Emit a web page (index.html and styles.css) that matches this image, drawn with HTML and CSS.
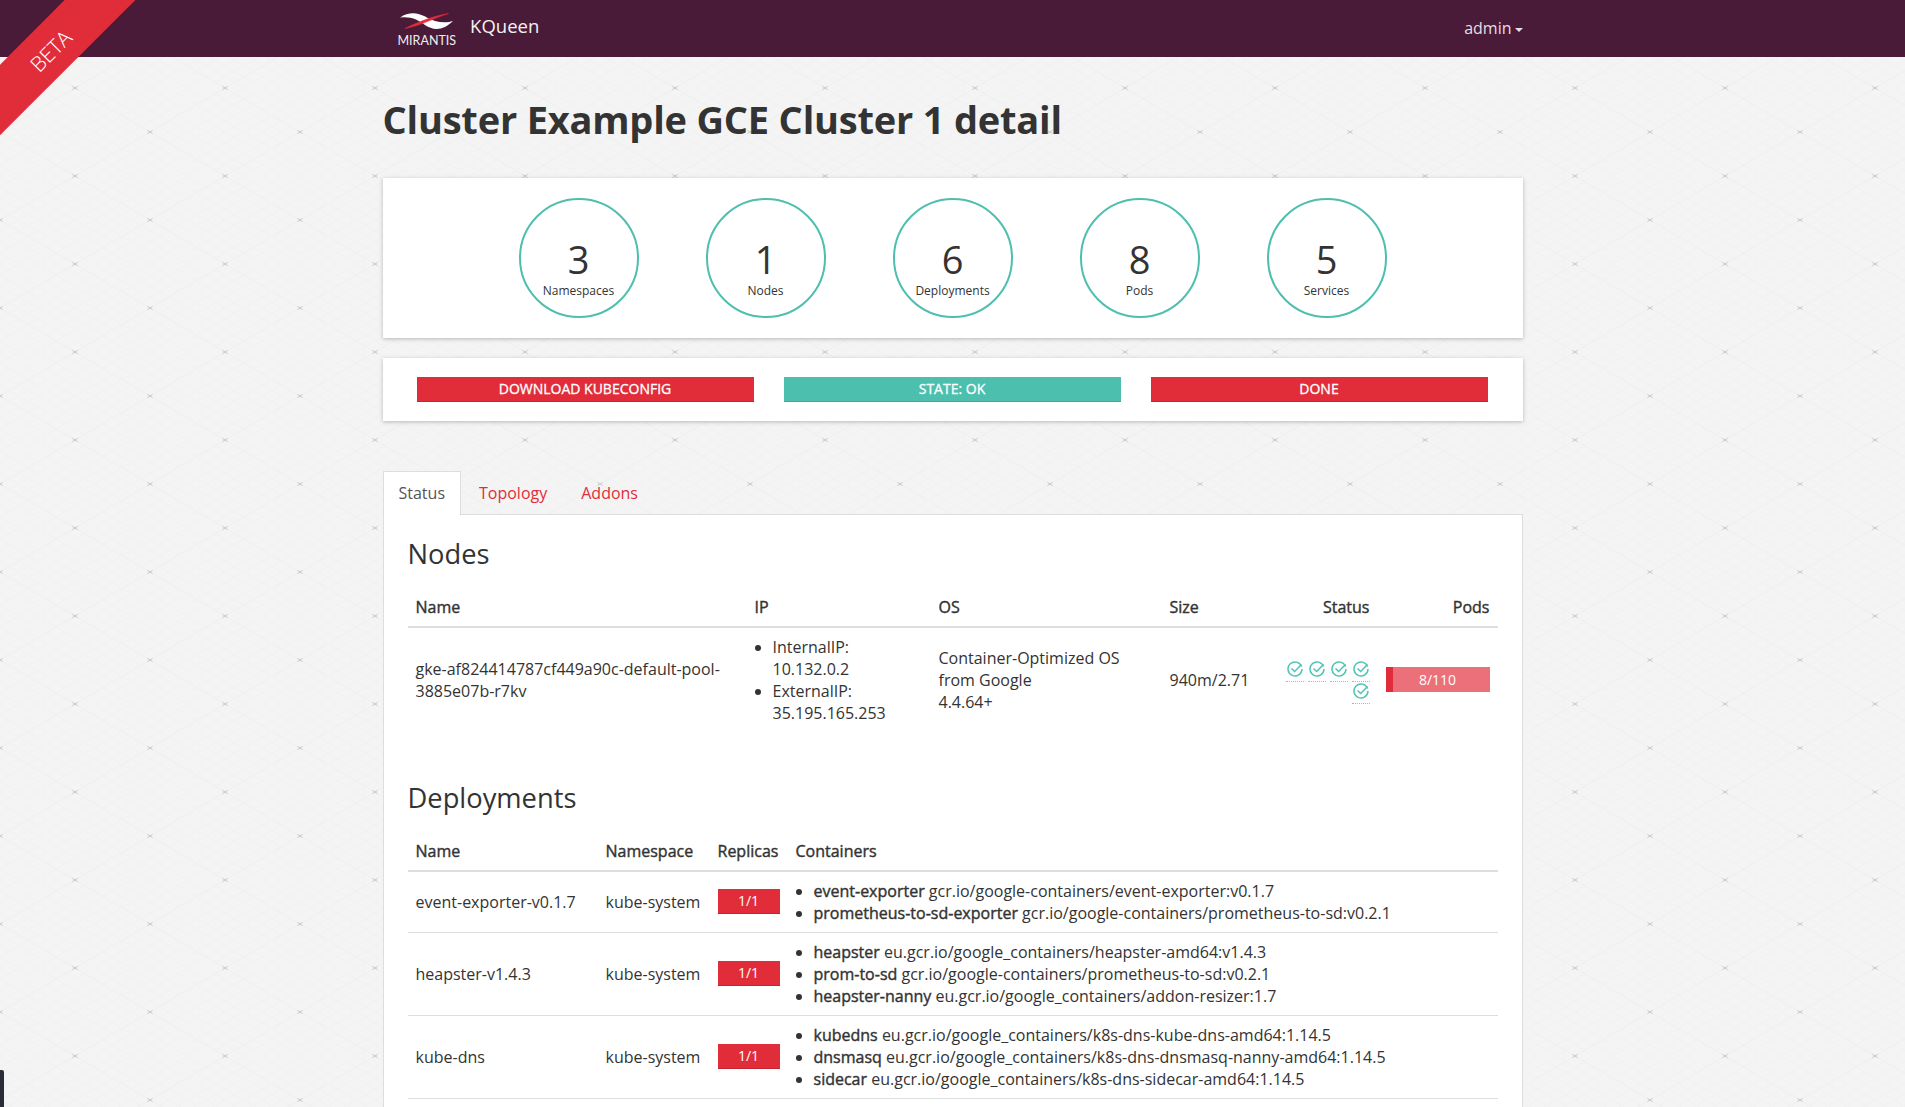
FILE: index.html
```html
<!DOCTYPE html>
<html lang="en">

<head>
  <meta charset="UTF-8">
  <meta name="viewport" content="width=device-width, initial-scale=1.0">
  <title>KQueen - Cluster detail</title>
  <link rel="stylesheet" href="styles.css">
</head>

<body>

  <div class="ribbon">BETA</div>
  <div class="corner-tab"></div>

  <nav class="navbar">
    <div class="container navbar-inner">
      <a class="brand" href="#">
        <span class="logo">
          <svg width="54" height="17" viewBox="0 0 54 17">
            <path d="M0 4.7C4 1.5 9 .3 13 .3C22 .3 28 6 35 8C41 9.8 48 9.8 53 8C48 13 42 16 36.7 16C28 16 22 9 16 6.5C11 4.5 5 3.8 0 4.7Z" fill="#fff"/>
            <path d="M5 15.5C20 13 33 5.5 48.5 .6C33 3 18 9 5 15.5Z" fill="#e12d3a" stroke="#e12d3a" stroke-width=".5"/>
          </svg>
          <span class="logo-text">MIRANTIS</span>
        </span>
        <span class="brand-name">KQueen</span>
      </a>
      <a class="user-menu" href="#">admin<span class="caret"></span></a>
    </div>
  </nav>

  <div class="container">
    <h1 class="page-title">Cluster Example GCE Cluster 1 detail</h1>

    <div class="card stats">
      <div class="stat"><span class="stat-value">3</span><span class="stat-label">Namespaces</span></div>
      <div class="stat"><span class="stat-value">1</span><span class="stat-label">Nodes</span></div>
      <div class="stat"><span class="stat-value">6</span><span class="stat-label">Deployments</span></div>
      <div class="stat"><span class="stat-value">8</span><span class="stat-label">Pods</span></div>
      <div class="stat"><span class="stat-value">5</span><span class="stat-label">Services</span></div>
    </div>

    <div class="card actions">
      <a class="btn btn-red" href="#">Download kubeconfig</a>
      <span class="btn btn-green">State: OK</span>
      <a class="btn btn-red" href="#">Done</a>
    </div>

    <ul class="tabs">
      <li class="tab active"><a href="#">Status</a></li>
      <li class="tab"><a href="#">Topology</a></li>
      <li class="tab"><a href="#">Addons</a></li>
    </ul>

    <div class="tab-panel">
      <h2 class="section-title">Nodes</h2>
      <table class="table nodes-table">
        <colgroup>
          <col class="c-node-name"><col class="c-node-ip"><col class="c-node-os"><col class="c-node-size"><col class="c-node-status"><col class="c-node-pods">
        </colgroup>
        <thead>
          <tr>
            <th>Name</th>
            <th>IP</th>
            <th>OS</th>
            <th>Size</th>
            <th class="right">Status</th>
            <th class="right">Pods</th>
          </tr>
        </thead>
        <tbody>
          <tr>
            <td>gke-af824414787cf449a90c-default-pool-3885e07b-r7kv</td>
            <td>
              <ul class="plain-list">
                <li>InternalIP: 10.132.0.2</li>
                <li>ExternalIP: 35.195.165.253</li>
              </ul>
            </td>
            <td>Container-Optimized OS from Google<br>4.4.64+</td>
            <td>940m/2.71</td>
            <td class="right status-cell">
              <span class="check"><svg width="16" height="16" viewBox="0 0 16 16"><path d="M14.6 5.6A7 7 0 1 0 15 8" /><path d="M4.5 7.5L7.6 10.5L14.5 3.5" /></svg></span>
              <span class="check"><svg width="16" height="16" viewBox="0 0 16 16"><path d="M14.6 5.6A7 7 0 1 0 15 8" /><path d="M4.5 7.5L7.6 10.5L14.5 3.5" /></svg></span>
              <span class="check"><svg width="16" height="16" viewBox="0 0 16 16"><path d="M14.6 5.6A7 7 0 1 0 15 8" /><path d="M4.5 7.5L7.6 10.5L14.5 3.5" /></svg></span>
              <span class="check"><svg width="16" height="16" viewBox="0 0 16 16"><path d="M14.6 5.6A7 7 0 1 0 15 8" /><path d="M4.5 7.5L7.6 10.5L14.5 3.5" /></svg></span>
              <span class="check"><svg width="16" height="16" viewBox="0 0 16 16"><path d="M14.6 5.6A7 7 0 1 0 15 8" /><path d="M4.5 7.5L7.6 10.5L14.5 3.5" /></svg></span>
            </td>
            <td>
              <div class="progress">
                <div class="progress-fill" style="width: 7.27%"></div>
                <span class="progress-label">8/110</span>
              </div>
            </td>
          </tr>
        </tbody>
      </table>

      <h2 class="section-title deployments-title">Deployments</h2>
      <table class="table deployments-table">
        <colgroup>
          <col class="c-dep-name"><col class="c-dep-ns"><col class="c-dep-rep"><col class="c-dep-cont">
        </colgroup>
        <thead>
          <tr>
            <th>Name</th>
            <th>Namespace</th>
            <th>Replicas</th>
            <th>Containers</th>
          </tr>
        </thead>
        <tbody>
          <tr>
            <td>event-exporter-v0.1.7</td>
            <td>kube-system</td>
            <td><span class="replicas">1/1</span></td>
            <td>
              <ul class="plain-list">
                <li><b>event-exporter</b> gcr.io/google-containers/event-exporter:v0.1.7</li>
                <li><b>prometheus-to-sd-exporter</b> gcr.io/google-containers/prometheus-to-sd:v0.2.1</li>
              </ul>
            </td>
          </tr>
          <tr>
            <td>heapster-v1.4.3</td>
            <td>kube-system</td>
            <td><span class="replicas">1/1</span></td>
            <td>
              <ul class="plain-list">
                <li><b>heapster</b> eu.gcr.io/google_containers/heapster-amd64:v1.4.3</li>
                <li><b>prom-to-sd</b> gcr.io/google-containers/prometheus-to-sd:v0.2.1</li>
                <li><b>heapster-nanny</b> eu.gcr.io/google_containers/addon-resizer:1.7</li>
              </ul>
            </td>
          </tr>
          <tr>
            <td>kube-dns</td>
            <td>kube-system</td>
            <td><span class="replicas">1/1</span></td>
            <td>
              <ul class="plain-list">
                <li><b>kubedns</b> eu.gcr.io/google_containers/k8s-dns-kube-dns-amd64:1.14.5</li>
                <li><b>dnsmasq</b> eu.gcr.io/google_containers/k8s-dns-dnsmasq-nanny-amd64:1.14.5</li>
                <li><b>sidecar</b> eu.gcr.io/google_containers/k8s-dns-sidecar-amd64:1.14.5</li>
              </ul>
            </td>
          </tr>
        </tbody>
      </table>
    </div>
  </div>

</body>

</html>
```

FILE: styles.css
```css
html,
body {
  height: 100vh;
  overflow: hidden;
}

body {
  margin: 0;
  background-color: #f4f4f4;
  background-image: url("data:image/svg+xml,%3Csvg xmlns='http://www.w3.org/2000/svg' width='150' height='88'%3E%3Cdefs%3E%3Cpattern id='m' width='18.75' height='11' patternUnits='userSpaceOnUse'%3E%3Cpath d='M0 0L18.75 11M18.75 0L0 11' stroke='%23f0f0f0' stroke-width='.8'/%3E%3C/pattern%3E%3C/defs%3E%3Crect width='150' height='88' fill='url(%23m)'/%3E%3Cpath d='M75 0L0 44L75 88L150 44Z' fill='none' stroke='%23efefef'/%3E%3Cpath d='M72.5 -1.5L77.5 1.5M77.5 -1.5L72.5 1.5M72.5 86.5L77.5 89.5M77.5 86.5L72.5 89.5M-2.5 42.5L2.5 45.5M2.5 42.5L-2.5 45.5M147.5 42.5L152.5 45.5M152.5 42.5L147.5 45.5' stroke='%23c8c8c8'/%3E%3C/svg%3E");
  font-family: "Open Sans", sans-serif;
  font-size: 16px;
  line-height: 22px;
  color: #333;
}

a {
  text-decoration: none;
}

.container {
  width: 1140px;
  margin: 0 auto;
}

/* top bar */
.navbar {
  height: 57px;
  background-color: #4a1b38;
}

.navbar-inner {
  display: flex;
  align-items: center;
  justify-content: space-between;
  height: 57px;
}

.brand {
  display: flex;
  align-items: center;
  margin-left: 15px;
  color: #fff;
}

.logo {
  display: flex;
  flex-direction: column;
  align-items: center;
  margin-top: 2px;
}

.logo svg {
  display: block;
  margin-bottom: 4px;
}

.logo-text {
  font-family: "Lato", sans-serif;
  font-size: 12.5px;
  line-height: 13px;
  color: #eee;
}

.brand-name {
  margin-left: 14px;
  margin-top: -5px;
  font-size: 18.5px;
  color: #f2f2f2;
}

.user-menu {
  color: #e6dfe4;
  font-size: 16px;
  margin-top: -1px;
}

.caret {
  display: inline-block;
  margin-left: 3px;
  vertical-align: middle;
  border-top: 4px solid #e6dfe4;
  border-left: 4px solid transparent;
  border-right: 4px solid transparent;
}

.ribbon {
  position: absolute;
  top: 25px;
  left: -50px;
  width: 200px;
  height: 50px;
  background-color: #e12d3a;
  color: #fff;
  font-size: 21px;
  font-weight: 300;
  line-height: 53px;
  text-align: center;
  transform: rotate(-45deg);
}

.corner-tab {
  position: fixed;
  left: 0;
  bottom: 0;
  width: 4px;
  height: 37px;
  background-color: #2a2c38;
  border-top-right-radius: 2px;
}

.page-title {
  margin: 0;
  padding-top: 39px;
  height: 82px;
  font-size: 38px;
  line-height: 46px;
  font-weight: 700;
  letter-spacing: -0.2px;
  color: #333;
}

.card {
  background-color: #fff;
  box-shadow: 0 1px 4px rgba(0, 0, 0, 0.25);
}

.stats {
  display: flex;
  justify-content: center;
  gap: 67px;
  height: 160px;
  padding: 20px 0 0;
  box-sizing: border-box;
}

.stat {
  display: flex;
  flex-direction: column;
  align-items: center;
  box-sizing: border-box;
  width: 120px;
  height: 120px;
  border: 2px solid #4dbfae;
  border-radius: 50%;
}

.stat-value {
  margin-top: 37px;
  font-size: 38px;
  line-height: 44px;
}

.stat-label {
  margin-top: 2px;
  font-size: 12px;
  line-height: 16px;
}

.actions {
  display: flex;
  gap: 30px;
  margin-top: 20px;
  padding: 19px 35px 19px 34px;
}

.btn {
  flex: 1;
  height: 25px;
  box-sizing: border-box;
  font-size: 14px;
  font-weight: 500;
  -webkit-text-stroke: 0.3px #fff;
  line-height: 24px;
  text-align: center;
  text-transform: uppercase;
  color: #fff;
}

.btn-red {
  background-color: #e12d3a;
  border-bottom: 1px solid #c4252f;
}

.btn-green {
  background-color: #4dbfae;
  border-bottom: 1px solid #3fa797;
}

.tabs {
  display: flex;
  margin: 50px 0 0;
  padding: 0;
  list-style: none;
  border-bottom: 1px solid #ddd;
}

.tab {
  margin-right: 2px;
  margin-bottom: -1px;
}

.tab a {
  display: block;
  padding: 10px 15px;
  border: 1px solid transparent;
  border-bottom: 0;
  color: #e12d3a;
}

.tab.active a {
  padding-bottom: 11px;
  color: #555;
  background-color: #fff;
  border-color: #ddd;
}

.tab-panel {
  background-color: #fff;
  border: 1px solid #ddd;
  border-top: 0;
  padding: 16px 24px 9px;
}

.section-title {
  margin: 0;
  font-size: 27.3px;
  line-height: 46px;
  font-weight: 400;
}

.deployments-title {
  margin-top: 43px;
}

.table {
  width: 100%;
  table-layout: fixed;
  border-collapse: collapse;
  margin-top: 11px;
}

.table th {
  padding: 8px;
  text-align: left;
  font-weight: 500;
  -webkit-text-stroke: 0.4px #333;
  border-bottom: 2px solid #ddd;
}

.table td {
  padding: 8px;
  vertical-align: middle;
  border-bottom: 1px solid #ddd;
}

.nodes-table td {
  border-bottom: 0;
}

.table .right {
  text-align: right;
}

.plain-list {
  margin: 0;
  padding-left: 18px;
}

.plain-list b {
  font-weight: 500;
  -webkit-text-stroke: 0.4px #333;
}

.c-node-name { width: 339px; }
.c-node-ip { width: 184px; }
.c-node-os { width: 231px; }
.c-node-size { width: 100px; }
.c-node-status { width: 116px; }
.c-node-pods { width: 120px; }

.c-dep-name { width: 190px; }
.c-dep-ns { width: 112px; }
.c-dep-rep { width: 78px; }

.table .status-cell {
  padding-top: 12px;
  font-size: 0;
  line-height: 0;
}

.check {
  display: inline-block;
  box-sizing: border-box;
  width: 18px;
  height: 22px;
  margin-left: 4px;
  padding: 1px 1px 0;
  border-bottom: 1px dotted #b5b5b5;
  text-align: center;
}

.check svg {
  display: block;
  fill: none;
  stroke: #4dc4b5;
  stroke-width: 1.5;
}

.progress {
  position: relative;
  height: 25px;
  margin-top: -1px;
  background-color: #ec7079;
}

.progress-fill {
  height: 25px;
  background-color: #e12d3a;
}

.progress-label {
  position: absolute;
  top: 0;
  left: 0;
  right: 0;
  font-size: 14px;
  font-weight: 500;
  line-height: 25px;
  text-align: center;
  color: #fff;
}

.replicas {
  display: block;
  height: 25px;
  margin-top: -1px;
  box-sizing: border-box;
  background-color: #e12d3a;
  border-bottom: 1px solid #c4252f;
  font-size: 14px;
  font-weight: 500;
  line-height: 24px;
  text-align: center;
  color: #fff;
}
```
